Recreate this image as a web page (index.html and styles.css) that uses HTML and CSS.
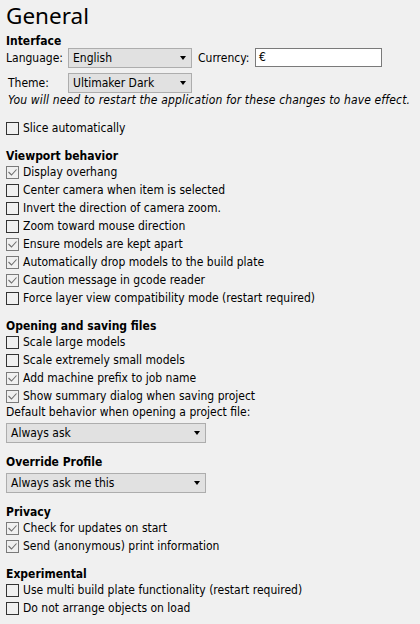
FILE: index.html
```html
<!DOCTYPE html>
<html lang="en">
<head>
<meta charset="utf-8">
<title>General</title>
<link rel="stylesheet" href="styles.css">
</head>
<body>
<div class="page">
  <h1 class="title">General</h1>

  <div class="head">Interface</div>
  <div class="form-row">
    <span class="lbl">Language:</span>
    <div class="combo combo-sm"><span>English</span><i class="arrow"></i></div>
    <span class="cur-lbl">Currency:</span>
    <div class="input">€</div>
  </div>
  <div class="form-row theme-row">
    <span class="lbl theme-lbl">Theme:</span>
    <div class="combo combo-sm"><span>Ultimaker Dark</span><i class="arrow"></i></div>
  </div>
  <div class="note">You will need to restart the application for these changes to have effect.</div>

  <div class="check-row slice"><span class="box"></span><span>Slice automatically</span></div>

  <div class="section">
    <div class="head">Viewport behavior</div>
    <div class="check-row"><span class="box on"><svg viewBox="0 0 11 11" width="11" height="11"><polyline points="1.5,5 4.5,8 9.5,2.5" /></svg></span><span>Display overhang</span></div>
    <div class="check-row"><span class="box"></span><span>Center camera when item is selected</span></div>
    <div class="check-row"><span class="box"></span><span>Invert the direction of camera zoom.</span></div>
    <div class="check-row"><span class="box"></span><span>Zoom toward mouse direction</span></div>
    <div class="check-row"><span class="box on"><svg viewBox="0 0 11 11" width="11" height="11"><polyline points="1.5,5 4.5,8 9.5,2.5" /></svg></span><span>Ensure models are kept apart</span></div>
    <div class="check-row"><span class="box on"><svg viewBox="0 0 11 11" width="11" height="11"><polyline points="1.5,5 4.5,8 9.5,2.5" /></svg></span><span>Automatically drop models to the build plate</span></div>
    <div class="check-row"><span class="box on"><svg viewBox="0 0 11 11" width="11" height="11"><polyline points="1.5,5 4.5,8 9.5,2.5" /></svg></span><span>Caution message in gcode reader</span></div>
    <div class="check-row"><span class="box"></span><span>Force layer view compatibility mode (restart required)</span></div>
  </div>

  <div class="section">
    <div class="head">Opening and saving files</div>
    <div class="check-row"><span class="box"></span><span>Scale large models</span></div>
    <div class="check-row"><span class="box"></span><span>Scale extremely small models</span></div>
    <div class="check-row"><span class="box on"><svg viewBox="0 0 11 11" width="11" height="11"><polyline points="1.5,5 4.5,8 9.5,2.5" /></svg></span><span>Add machine prefix to job name</span></div>
    <div class="check-row"><span class="box on"><svg viewBox="0 0 11 11" width="11" height="11"><polyline points="1.5,5 4.5,8 9.5,2.5" /></svg></span><span>Show summary dialog when saving project</span></div>
    <div class="sub-label">Default behavior when opening a project file:</div>
    <div class="combo combo-lg"><span>Always ask</span><i class="arrow"></i></div>
  </div>

  <div class="section">
    <div class="head">Override Profile</div>
    <div class="combo combo-lg"><span>Always ask me this</span><i class="arrow"></i></div>
  </div>

  <div class="section">
    <div class="head">Privacy</div>
    <div class="check-row"><span class="box on"><svg viewBox="0 0 11 11" width="11" height="11"><polyline points="1.5,5 4.5,8 9.5,2.5" /></svg></span><span>Check for updates on start</span></div>
    <div class="check-row"><span class="box on"><svg viewBox="0 0 11 11" width="11" height="11"><polyline points="1.5,5 4.5,8 9.5,2.5" /></svg></span><span>Send (anonymous) print information</span></div>
  </div>

  <div class="section">
    <div class="head">Experimental</div>
    <div class="check-row"><span class="box"></span><span>Use multi build plate functionality (restart required)</span></div>
    <div class="check-row"><span class="box"></span><span>Do not arrange objects on load</span></div>
  </div>
</div>
</body>
</html>
```

FILE: styles.css
```css
html, body {
  margin: 0;
  padding: 0;
  background: #f0f0f0;
}

body {
  width: 420px;
  height: 624px;
  overflow: hidden;
  font-family: "DejaVu Sans Condensed", "Liberation Sans", sans-serif;
  font-size: 12px;
  color: #000;
}

.page {
  padding: 0 6px;
}

.title {
  margin: 0;
  font-family: "Noto Sans", "Liberation Sans", sans-serif;
  font-weight: 400;
  font-size: 22.5px;
  line-height: 31px;
  height: 34px;
  white-space: nowrap;
}

.head {
  font-weight: bold;
  line-height: 14px;
  height: 14px;
  white-space: nowrap;
}

.section {
  margin-top: 12px;
}

.form-row {
  display: flex;
  align-items: center;
  height: 20px;
  white-space: nowrap;
}

.theme-row {
  margin-top: 5px;
}

.lbl {
  width: 62px;
  flex: none;
}

.theme-lbl {
  width: 60px;
  padding-left: 2px;
}

.combo {
  box-sizing: border-box;
  height: 20px;
  border: 1px solid #adadad;
  background: #e1e1e1;
  display: flex;
  align-items: center;
  justify-content: space-between;
  padding: 0 5px 0 4px;
  white-space: nowrap;
  flex: none;
}

.combo-sm {
  width: 124px;
}

.combo-lg {
  width: 200px;
  margin-top: 4px;
}

.arrow {
  display: block;
  width: 0;
  height: 0;
  border-left: 3.5px solid transparent;
  border-right: 3.5px solid transparent;
  border-top: 4px solid #000;
}

.cur-lbl {
  margin-left: 6px;
  width: 57px;
  flex: none;
}

.input {
  box-sizing: border-box;
  width: 127px;
  height: 19px;
  border: 1px solid #7a7a7a;
  background: #fff;
  padding-left: 3px;
  line-height: 17px;
  align-self: flex-start;
}

.note {
  font-style: italic;
  line-height: 14px;
  padding-left: 2px;
  letter-spacing: 0.15px;
  white-space: nowrap;
}

.check-row {
  display: flex;
  align-items: center;
  height: 18px;
  white-space: nowrap;
}

.slice {
  margin-top: 12px;
}

.box {
  box-sizing: border-box;
  width: 13px;
  height: 13px;
  border: 1px solid #333;
  margin-right: 4px;
  flex: none;
}

.box.on {
  border-color: #7a7a7a;
}

.box svg {
  display: block;
}

.box polyline {
  fill: none;
  stroke: #6e6e6e;
  stroke-width: 1.1;
}

.sub-label {
  line-height: 14px;
  white-space: nowrap;
}
```
